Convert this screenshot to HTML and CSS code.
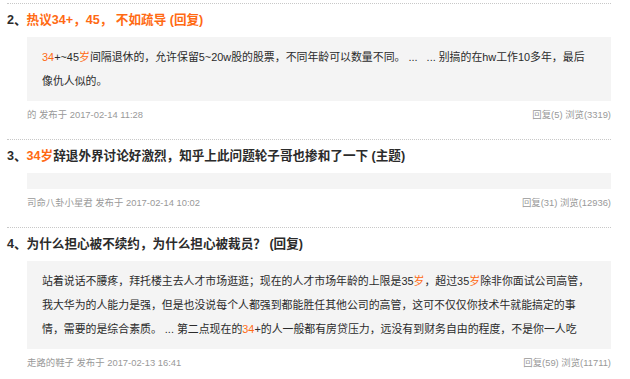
FILE: index.html
```html
<!DOCTYPE html>
<html lang="zh-CN">
<head>
<meta charset="utf-8">
<title>帖子列表</title>
<link rel="stylesheet" href="styles.css">
</head>
<body>
<div class="list">
  <div class="item">
    <div class="title"><span class="num">2、</span><span class="hl">热议34+，45， 不如疏导 (回复)</span></div>
    <div class="excerpt"><span class="hl">34</span>+~45<span class="hl">岁</span>间隔退休的，允许保留5~20w股的股票，不同年龄可以数量不同。 ... &nbsp; ... 别搞的在hw工作10多年，最后像仇人似的。</div>
    <div class="meta"><span>的 发布于 2017-02-14 11:28</span><span class="stats">回复(5) 浏览(3319)</span></div>
  </div>
  <div class="item">
    <div class="title"><span class="num">3、</span><span class="hl">34岁</span>辞退外界讨论好激烈，知乎上此问题轮子哥也掺和了一下 (主题)</div>
    <div class="excerpt"></div>
    <div class="meta"><span>司命八卦小星君 发布于 2017-02-14 10:02</span><span class="stats">回复(31) 浏览(12936)</span></div>
  </div>
  <div class="item">
    <div class="title"><span class="num">4、</span>为什么担心被不续约，为什么担心被裁员？ (回复)</div>
    <div class="excerpt">站着说话不腰疼，拜托楼主去人才市场逛逛；现在的人才市场年龄的上限是35<span class="hl">岁</span>，超过35<span class="hl">岁</span>除非你面试公司高管，我大华为的人能力是强，但是也没说每个人都强到都能胜任其他公司的高管，这可不仅仅你技术牛就能搞定的事情，需要的是综合素质。 ... 第二点现在的<span class="hl">34</span>+的人一般都有房贷压力，远没有到财务自由的程度，不是你一人吃</div>
    <div class="meta"><span>走路的鞋子 发布于 2017-02-13 16:41</span><span class="stats">回复(59) 浏览(11711)</span></div>
  </div>
</div>
<div class="fade"></div>
</body>
</html>
```
FILE: styles.css
```css
html, body {
  margin: 0;
  padding: 0;
  background: #fff;
  overflow: hidden;
}
body {
  font-family: "Liberation Sans", "Noto Sans CJK SC", sans-serif;
  color: #333;
  width: 630px;
  height: 379px;
  position: relative;
}
.list {
  padding: 3px 19px 0 7px;
}
.item {
  border-top: 1px dotted #c8c8c8;
  padding: 6px 0 16px;
}
.title {
  font-size: 12.6px;
  font-weight: bold;
  line-height: 20px;
  color: #2b2b2b;
  white-space: nowrap;
}
.hl {
  color: #ff6a13;
}
.excerpt {
  margin: 7px 0 0 20px;
  background: #f4f4f4;
  padding: 8px 20px 8px 15px;
  font-size: 10.9px;
  line-height: 24px;
  color: #2b2b2b;
}
.meta {
  margin: 6px 0 0 20px;
  display: flex;
  justify-content: space-between;
  font-size: 9.4px;
  line-height: 16px;
  color: #999;
}
.fade {
  position: absolute;
  left: 0;
  right: 0;
  bottom: 0;
  height: 10px;
  background: linear-gradient(rgba(255,255,255,0), rgba(255,255,255,0.6));
}
```
